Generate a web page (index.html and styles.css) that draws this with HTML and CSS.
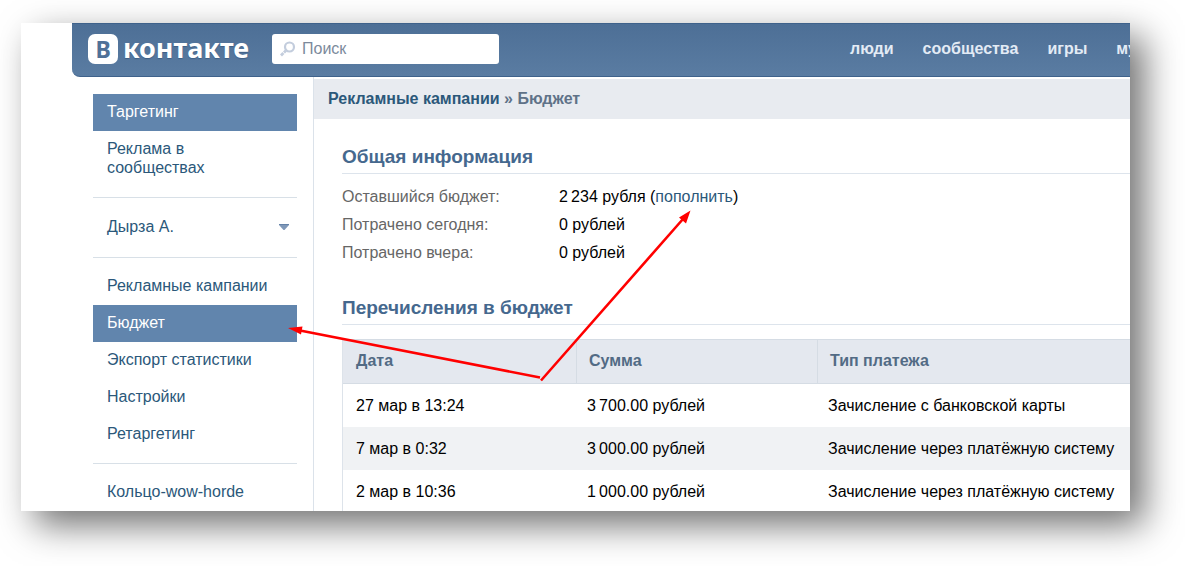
FILE: index.html
```html
<!DOCTYPE html>
<html lang="ru">
<head>
<meta charset="utf-8">
<title>Бюджет</title>
<link rel="stylesheet" href="styles.css">
</head>
<body>
<div class="window">
  <header class="topbar">
    <a class="logo" href="#"><span class="logo-mark">В</span><span class="logo-name">контакте</span></a>
    <label class="search">
      <svg class="search-icon" width="16" height="16" viewBox="0 0 16 16" aria-hidden="true">
        <circle cx="9.500" cy="6" r="4.500" fill="none" stroke="#c3cddd" stroke-width="2.2"/>
        <path d="M6 9.500L4 11.500M3.400 12L1 14.400" stroke="#c3cddd" stroke-width="2.8" fill="none"/>
      </svg>
      <input class="search-input" type="text" placeholder="Поиск" aria-label="Поиск">
    </label>
    <nav class="topnav">
      <a href="#">люди</a>
      <a href="#">сообщества</a>
      <a href="#">игры</a>
      <a href="#">музыка</a>
    </nav>
  </header>
  <div class="body">
    <nav class="sidebar">
      <a class="item active" href="#">Таргетинг</a>
      <a class="item" href="#">Реклама в сообществах</a>
      <hr class="divider">
      <button class="item user" type="button">Дырза А.
        <svg width="10" height="6" viewBox="0 0 10 6" aria-hidden="true"><path d="M0 0H10V1L5.500 6H4.500L0 1Z" fill="#7f98b8"/><path d="M0 0H10V1H0Z" fill="#6482a8"/></svg>
      </button>
      <hr class="divider">
      <a class="item" href="#">Рекламные кампании</a>
      <a class="item active" href="#">Бюджет</a>
      <a class="item" href="#">Экспорт статистики</a>
      <a class="item" href="#">Настройки</a>
      <a class="item" href="#">Ретаргетинг</a>
      <hr class="divider">
      <a class="item" href="#">Кольцо-wow-horde</a>
    </nav>
    <main class="content">
      <div class="crumbs"><a href="#">Рекламные кампании</a> » Бюджет</div>
      <section class="section">
        <h2 class="title">Общая информация</h2>
        <dl class="facts">
          <dt>Оставшийся бюджет:</dt><dd>2&#8201;234 рубля (<a href="#">пополнить</a>)</dd>
          <dt>Потрачено сегодня:</dt><dd>0 рублей</dd>
          <dt>Потрачено вчера:</dt><dd>0 рублей</dd>
        </dl>
      </section>
      <section class="section">
        <h2 class="title">Перечисления в бюджет</h2>
        <table class="payments">
          <thead>
            <tr><th class="date">Дата</th><th class="sum">Сумма</th><th>Тип платежа</th></tr>
          </thead>
          <tbody>
            <tr><td>27 мар в 13:24</td><td>3&#8201;700.00 рублей</td><td>Зачисление с банковской карты</td></tr>
            <tr><td>7 мар в 0:32</td><td>3&#8201;000.00 рублей</td><td>Зачисление через платёжную систему</td></tr>
            <tr><td>2 мар в 10:36</td><td>1&#8201;000.00 рублей</td><td>Зачисление через платёжную систему</td></tr>
          </tbody>
        </table>
      </section>
    </main>
  </div>
  <svg class="arrows" width="700" height="400" viewBox="21 23 700 400" aria-hidden="true">
    <path d="M540 377.500L300 330.500M541 380.500L683 219" stroke="#ff0000" stroke-width="2.6" fill="none"/>
    <path d="M288 328L302.500 326.500L301 334.500ZM690.500 210.500L686 223.500L679 217.500Z" fill="#ff0000"/>
  </svg>
</div>
</body>
</html>
```
FILE: styles.css
```css
* {
  box-sizing: border-box;
}

body {
  margin: 0;
  height: 100vh;
  padding: 23px 55px 55px 21px;
  background: #fff;
  color: #000;
  font: 16px/19px "Liberation Sans", Arial, sans-serif;
  overflow: hidden;
}

a {
  color: #2b587a;
  text-decoration: none;
}

.window {
  position: relative;
  height: 100%;
  background: #fff;
  overflow: hidden;
  box-shadow: 14px 14px 34px rgba(0, 0, 0, 0.56);
}

.topbar {
  display: flex;
  align-items: center;
  height: 54px;
  margin-left: 51px;
  padding: 0 0 2px 16px;
  border-top: 1px solid #3f628b;
  border-bottom: 1px solid #3f628b;
  border-bottom-left-radius: 8px;
  background: linear-gradient(#4d6f96, #5a7ca2);
}

.logo {
  display: flex;
  align-items: center;
  gap: 5px;
  width: 184px;
  flex: none;
  color: #fff;
  font: bold 27px/30px "Noto Sans", sans-serif;
}

.logo-mark {
  width: 30px;
  height: 30px;
  border-radius: 7px;
  background: #fff;
  color: #4f7198;
  font-size: 23px;
  text-align: center;
}

.logo-name {
  padding-bottom: 2px;
  line-height: 28px;
  text-shadow: 0 1px 1px #3f5f86;
}

.search {
  display: flex;
  align-items: center;
  gap: 6px;
  flex: none;
  width: 227px;
  height: 30px;
  padding: 0 8px;
  border-radius: 3px;
  background: #fff;
}

.search-input {
  flex: 1;
  min-width: 0;
  padding: 0 0 2px;
  border: 0;
  outline: 0;
  background: none;
  font: inherit;
}

.search-input::placeholder {
  color: #7c8a9c;
  opacity: 1;
}

.topnav {
  display: flex;
  gap: 29px;
  flex: none;
  margin-left: 351px;
  padding-bottom: 2px;
  font-weight: bold;
}

.topnav a {
  color: #e3ebf5;
}

.body {
  display: flex;
  gap: 16px;
  padding-left: 72px;
}

.sidebar {
  flex: none;
  width: 204px;
  padding-top: 17px;
}

.item {
  display: block;
  width: 100%;
  padding: 8px 14px 10px;
  border: 0;
  background: none;
  color: #2b587a;
  font: inherit;
  text-align: left;
}

.active {
  background: #6185ad;
  color: #fff;
}

.user {
  display: flex;
  align-items: center;
  justify-content: space-between;
  padding: 9px 8px 11px 14px;
}

.divider {
  height: 1px;
  margin: 10px 0;
  border: 0;
  background: #d8e0e7;
}

.content {
  flex: 1;
  min-width: 0;
  padding-top: 2px;
  border-left: 1px solid #dbe2ea;
  min-height: 440px;
}

.crumbs {
  height: 40px;
  padding: 10px 14px;
  background: #e8ebf0;
  color: #5f7288;
  font-weight: bold;
}

.section {
  padding: 27px 0 0 28px;
}

.title {
  margin: 0;
  padding-bottom: 5px;
  border-bottom: 1px solid #dde4ec;
  color: #45688e;
  font-size: 19px;
  line-height: 22px;
}

.facts {
  display: grid;
  grid-template-columns: 217px 1fr;
  row-gap: 9px;
  margin: 13px 0 8px;
}

.facts dt {
  color: #666;
}

.facts dd {
  margin: 0;
}

.payments {
  width: 100%;
  margin-top: 14px;
  border-collapse: separate;
  border-spacing: 0;
  border-left: 1px solid #dde3ea;
  table-layout: fixed;
  white-space: nowrap;
}

.payments th {
  height: 45px;
  padding: 0 13px 2px;
  border-top: 1px solid #d5dce4;
  border-bottom: 1px solid #d5dce4;
  background: #e4e8ef;
  color: #526b85;
  text-align: left;
}

.payments th + th {
  padding-left: 12px;
  border-left: 1px solid #d5dce4;
}

.payments td {
  height: 43px;
  padding: 0 0 1px 11px;
}

.payments td:first-child {
  padding-left: 13px;
}

.payments tr:nth-child(even) td {
  background: #f0f2f4;
}

.date {
  width: 233px;
}

.sum {
  width: 241px;
}

.arrows {
  position: absolute;
  top: 0;
  left: 0;
  pointer-events: none;
}
```
